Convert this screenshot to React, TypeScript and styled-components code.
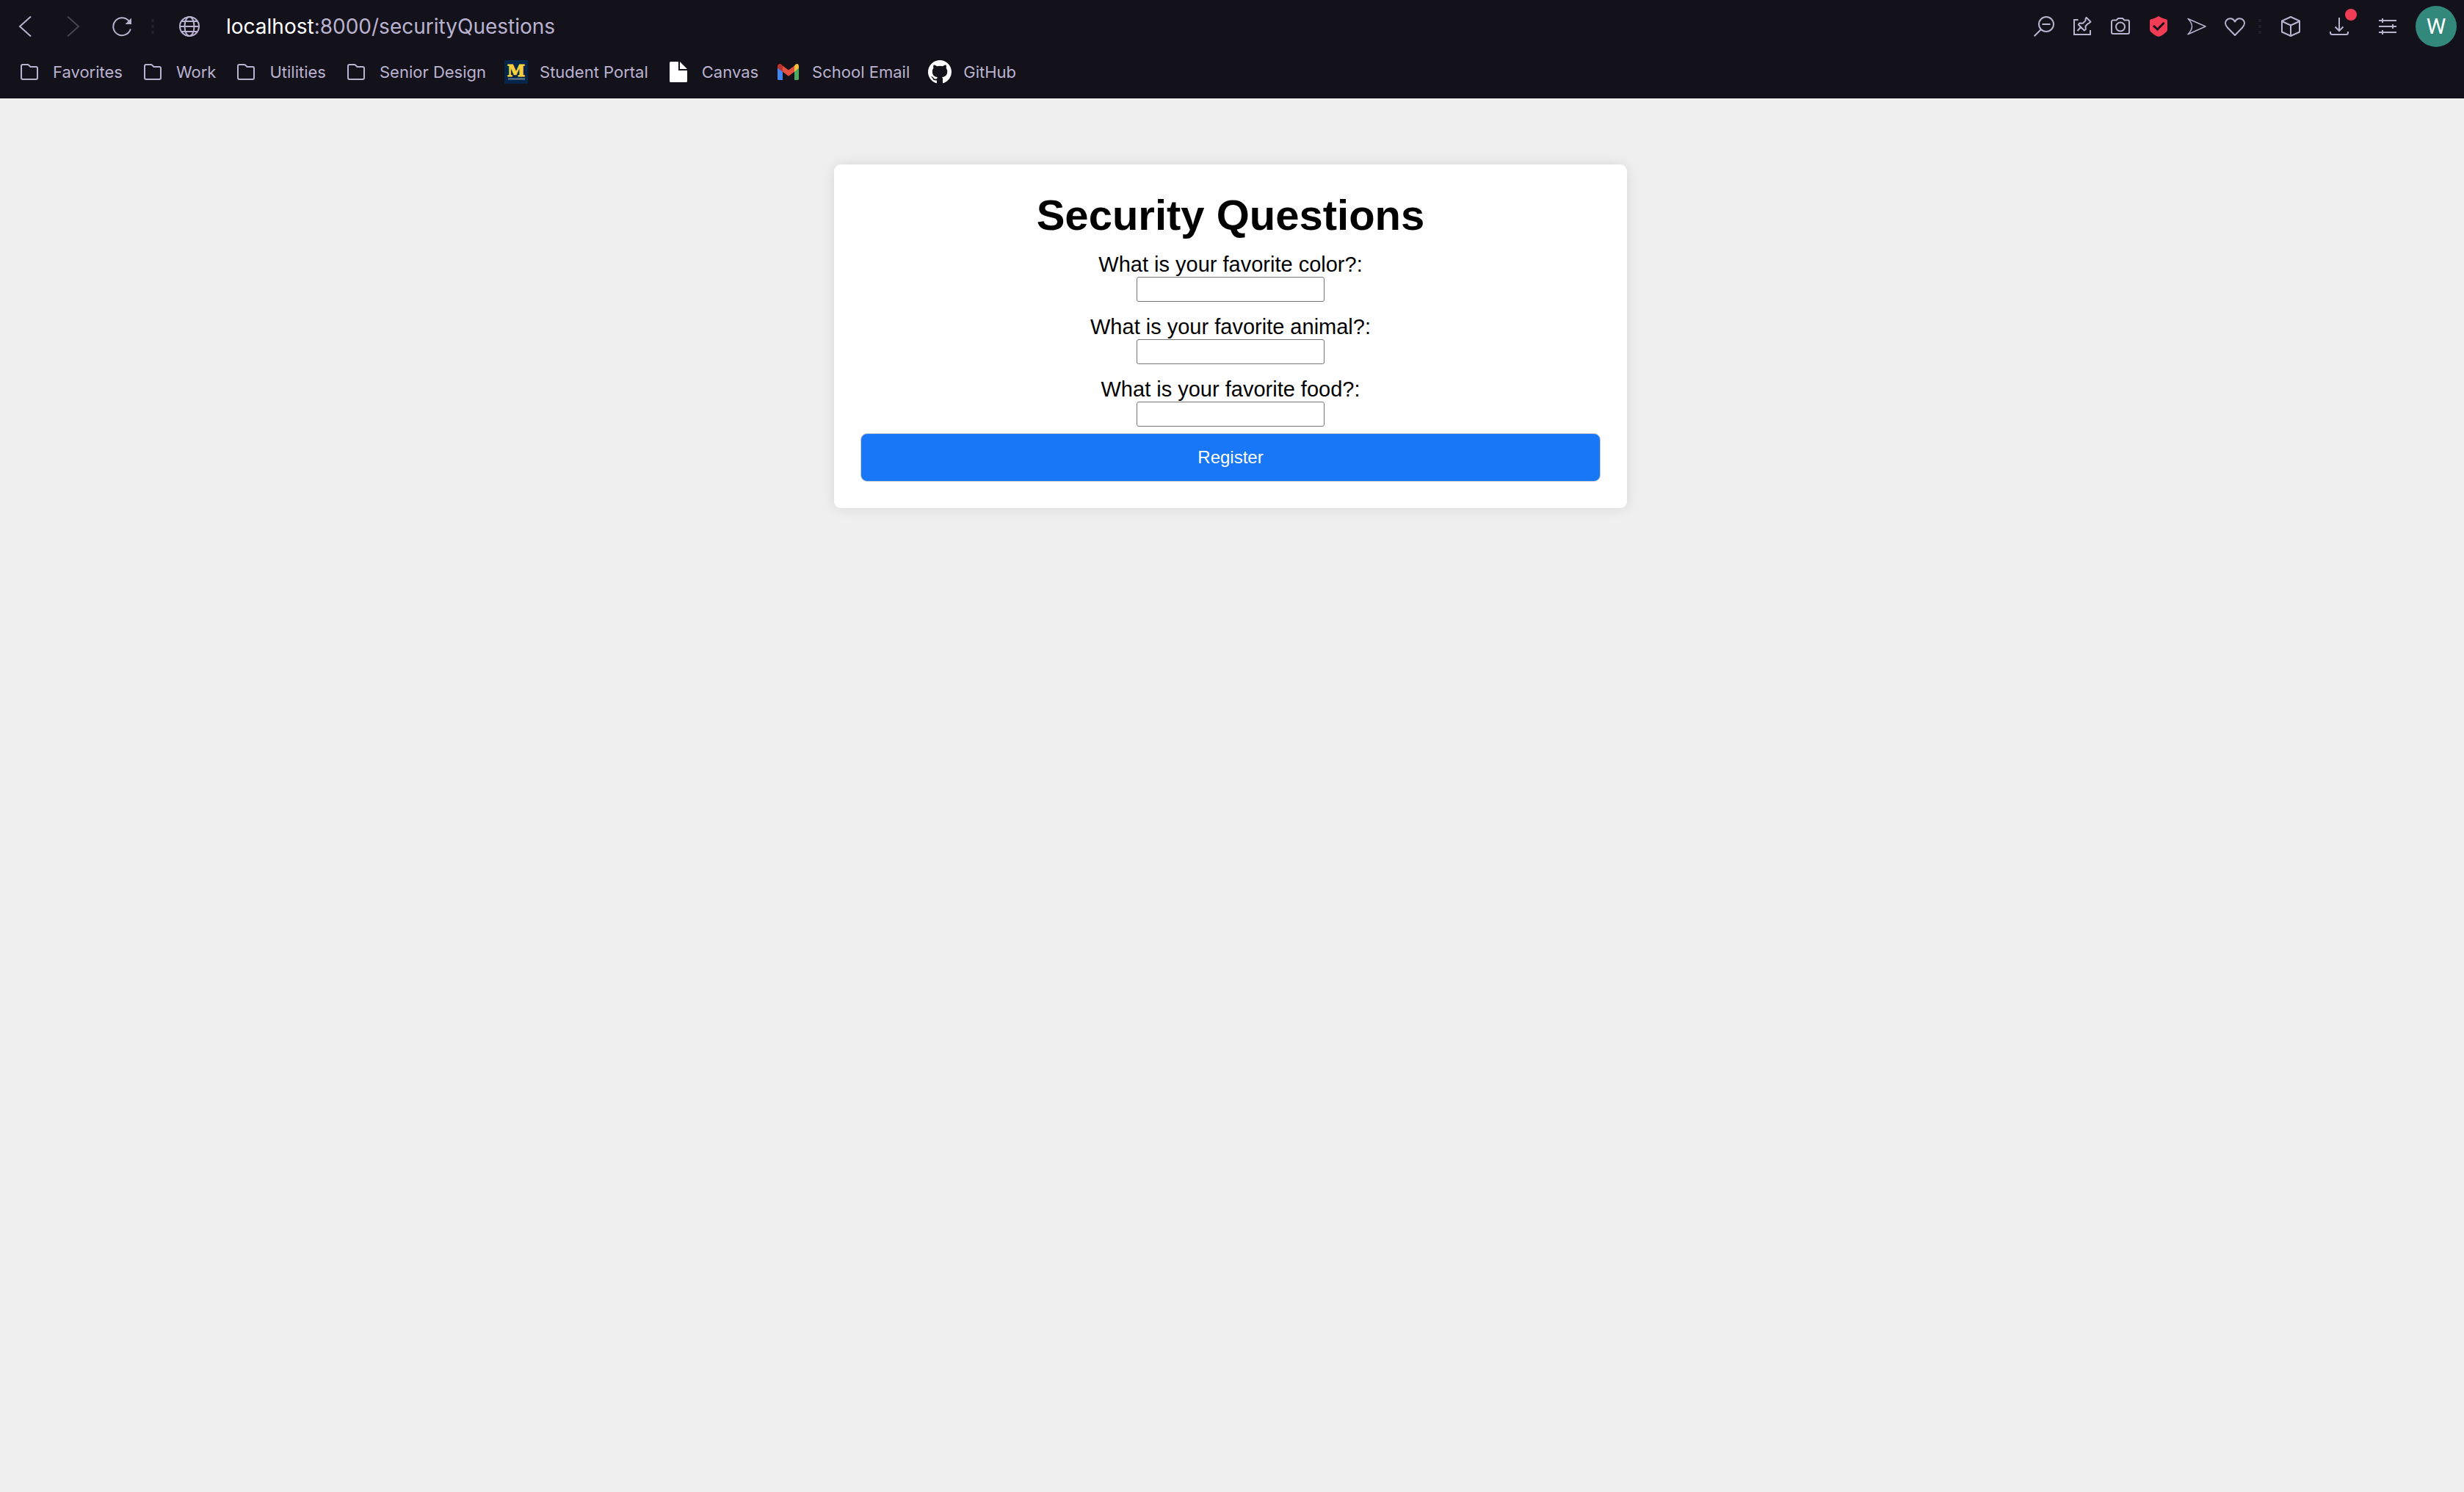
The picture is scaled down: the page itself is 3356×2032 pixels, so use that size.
import React from "react";
import styled, { createGlobalStyle } from "styled-components";

const GlobalStyle = createGlobalStyle`
  * { box-sizing: border-box; }
  body {
    margin: 0;
    background: #efefef;
    font-family: Arial, "Liberation Sans", sans-serif;
  }
`;

const Page = styled.div`
  min-height: 100vh;
  display: flex;
  flex-direction: column;
`;

const Chrome = styled.header`
  background: #13111a;
  color: #b9b3d0;
  border-bottom: 1px solid #0b0a10;
  font-family: Inter, "Noto Sans", sans-serif;
`;

const Toolbar = styled.div`
  display: flex;
  align-items: center;
  height: 72px;
  padding: 0 10px 0 8px;
`;

const Group = styled.div<{ $gap?: number }>`
  display: flex;
  align-items: center;
  gap: ${(p) => p.$gap ?? 0}px;
`;

const IconButton = styled.button`
  position: relative;
  display: flex;
  align-items: center;
  justify-content: center;
  width: 52px;
  height: 52px;
  padding: 0;
  border: 0;
  background: none;
  color: inherit;

  &:disabled { color: #47444f; }
`;

const Dots = styled.div<{ $tight?: boolean }>`
  display: grid;
  gap: 4px;
  margin: 0 14px 0 ${(p) => (p.$tight ? 6 : 14)}px;

  i {
    width: 4px;
    height: 4px;
    background: #211f2e;
  }
`;

const Address = styled.div`
  flex: 1;
  display: flex;
  align-items: center;
  gap: 36px;
  padding-left: 20px;
  font-size: 28px;
  line-height: 36px;
  white-space: nowrap;
`;

const Host = styled.span`
  color: #ffffff;
`;

const Alert = styled.span`
  position: absolute;
  top: 2px;
  right: 2px;
  width: 16px;
  height: 16px;
  border-radius: 50%;
  background: #f03c55;
`;

const Avatar = styled.button`
  width: 56px;
  height: 56px;
  margin-left: 12px;
  padding: 0;
  border: 0;
  border-radius: 50%;
  background: #31887b;
  color: #ffffff;
  font: 30px/56px Roboto, sans-serif;
`;

const Bookmarks = styled.nav`
  display: flex;
  gap: 25px;
  padding: 8px 24px 17px;
`;

const Bookmark = styled.a`
  display: flex;
  align-items: center;
  gap: 16px;
  height: 36px;
  color: inherit;
  font-size: 22px;
  line-height: 36px;
  text-decoration: none;
  white-space: nowrap;
`;

const Content = styled.main`
  flex: 1;
  padding: 90px 4px 90px 0;
`;

const Card = styled.form`
  width: 1080px;
  max-width: 100%;
  margin: 0 auto;
  padding: 36px;
  border-radius: 9px;
  background: #ffffff;
  box-shadow: 0 0 18px rgba(0, 0, 0, 0.1);
  color: #000000;
  text-align: center;
`;

const Title = styled.h1`
  margin: 0;
  font-size: 58px;
  line-height: 66px;
`;

const Field = styled.div`
  display: flex;
  flex-direction: column;
  align-items: center;
  margin-top: 18px;
`;

const Label = styled.label`
  font-size: 29px;
  line-height: 33px;
`;

const Answer = styled.input`
  width: 256px;
  height: 34px;
  padding: 2px 4px;
  border: 1px solid #767676;
  border-radius: 3px;
  background: #ffffff;
  font: 24px Arial, "Liberation Sans", sans-serif;
`;

const Submit = styled.button`
  display: block;
  width: 100%;
  height: 66px;
  margin-top: 9px;
  padding: 0;
  border: 1px solid #c4c8ce;
  border-radius: 9px;
  background: #1877f7;
  color: #ffffff;
  font: 24px Arial, "Liberation Sans", sans-serif;
`;

type IconProps = { size?: number; stroke?: number; children: React.ReactNode };

const Icon = ({ size = 28, stroke = 2, children }: IconProps) => (
  <svg
    width={size}
    height={size}
    viewBox={`0 0 ${size} ${size}`}
    fill="none"
    stroke="currentColor"
    strokeWidth={stroke}
    aria-hidden="true"
  >
    {children}
  </svg>
);

const Separator = ({ tight }: { tight?: boolean }) => (
  <Dots $tight={tight}>
    <i />
    <i />
    <i />
  </Dots>
);

const BackIcon = () => <Icon><path d="M22 .5 7 14l15 13.500" /></Icon>;
const ForwardIcon = () => <Icon><path d="M6 .5 21 14 6 27.500" /></Icon>;

const ReloadIcon = () => (
  <Icon>
    <path d="M25.800 17.500A12 12 0 1 1 23.500 6.500" />
    <path d="M27 2.500v8.500h-8.500Z" fill="currentColor" stroke="none" />
  </Icon>
);

const GlobeIcon = () => (
  <Icon>
    <circle cx="14" cy="14" r="13" />
    <ellipse cx="14" cy="14" rx="6.500" ry="13" />
    <path d="M1 14h26M3.500 7h21M3.500 21h21" />
  </Icon>
);

const ZoomOutIcon = () => (
  <Icon>
    <circle cx="17" cy="11" r="10" />
    <path d="M11.500 11h11M10 18 .7 27.300" />
  </Icon>
);

const PinIcon = () => (
  <Icon>
    <path d="M8.500 5H3v20h22v-6" />
    <path d="m19.500 1.800 6 6-2.500 2-1 .2-3.500 3.500.3 4.500-2 1.500-8-8 1.700-2 4.300.3 3.700-3.700V4ZM12.500 14.500 7.500 20" strokeLinejoin="round" />
  </Icon>
);

const CameraIcon = () => (
  <Icon>
    <path d="M4 5.500h4.500L11 3h6l2.500 2.500H24a2 2 0 0 1 2 2V22a2 2 0 0 1-2 2H4a2 2 0 0 1-2-2V7.500a2 2 0 0 1 2-2Z" strokeLinejoin="round" />
    <circle cx="14" cy="14.500" r="6" />
  </Icon>
);

const ShieldIcon = () => (
  <Icon stroke={3}>
    <path d="M14 0c3.500 2 7.500 3.500 11 4.500q1 .5 1 2V18q0 2-1.500 3.500C21.500 24.500 18 26.800 14 28 10 26.800 6.500 24.500 3.500 21.500Q2 20 2 18V6.500q0-1.500 1-2C6.500 3.500 10.500 2 14 0Z" fill="#f03c55" stroke="none" />
    <path d="m7 13 5.500 5 9-9" stroke="#13111a" />
  </Icon>
);

const SendIcon = () => (
  <Icon stroke={1.5}>
    <path d="M2 3.500 26 14 2 24.800Q7.500 19 7.500 14T2 3.500Z" strokeLinejoin="round" />
  </Icon>
);

const HeartIcon = () => (
  <Icon>
    <path d="M14 26 3.800 15.500C.5 12 .3 7.800 2.800 5.200 6 2 11.500 2.500 14 7.500c2.500-5 8-5.500 11.200-2.300 2.500 2.600 2.300 6.800-1 10.300Z" strokeLinejoin="round" />
  </Icon>
);

const CubeIcon = () => (
  <Icon>
    <path d="m14 1 12 5.500v15L14 27 2 21.500v-15ZM2 7l12 5.500L26 7M14 12.500V27" strokeLinejoin="round" />
  </Icon>
);

const DownloadIcon = () => (
  <Icon>
    <path d="M14 2v18M8.500 14.500 14 20l5.500-5.500M2 21v1.500Q2 25 4.500 25h19q2.500 0 2.500-2.500V21" />
  </Icon>
);

const SlidersIcon = () => (
  <Icon>
    <path d="M2 6h24M2 14h24M2 22h24M7 3v6M21 11v6M7 19v6" />
  </Icon>
);

const FolderIcon = () => (
  <Icon size={32}>
    <path d="M7 6h6.500q1 0 2 1l2 2H25q2 0 2 2v13q0 2-2 2H7q-2 0-2-2V8q0-2 2-2Z" strokeLinejoin="round" />
  </Icon>
);

const CampusIcon = () => (
  <Icon size={32}>
    <rect width="32" height="32" fill="#04254a" stroke="none" />
    <text x="16" y="22" textAnchor="middle" fontFamily="DejaVu Serif, serif" fontWeight="700" fontSize="22" fill="#f9cf3c" stroke="#f9cf3c" strokeWidth="1">M</text>
    <path d="M5 25.500h23" stroke="#6c7f92" strokeWidth="2" />
  </Icon>
);

const FileIcon = () => (
  <Icon size={32}>
    <path d="M5.500 2H16v12h12v14.500q0 1.500-1.500 1.500h-21Q4 30 4 28.500v-25Q4 2 5.500 2ZM18 2l10 10H18Z" fill="#ffffff" stroke="none" />
  </Icon>
);

const MailIcon = () => (
  <Icon size={32}>
    <g stroke="none">
      <path d="M1 10v15.500q0 1.500 1.500 1.500H8V14.500Z" fill="#4384f3" />
      <path d="M24 14.500V27h4.500q1.500 0 1.500-1.500V10Z" fill="#4ea860" />
      <path d="M8 7.500 16 13.500l8-6v8.200l-8 6-8-6Z" fill="#e5503f" />
      <path d="M1 8.500C1 5 4.500 4 7 6.300L8 7.500v8.200l-7-5.200Z" fill="#bd322c" />
      <path d="M24 7.500 25 6.300C27.500 4 30 5 30 8.500v2l-6 5.200Z" fill="#f8c13c" />
    </g>
  </Icon>
);

const GitHubIcon = () => (
  <svg width="32" height="32" viewBox="0 0 16 16" fill="#ffffff" aria-hidden="true">
    <path d="M8 0C3.580 0 0 3.580 0 8c0 3.540 2.290 6.530 5.470 7.590.4.070.55-.17.55-.38 0-.19-.01-.82-.01-1.490-2.010.37-2.530-.49-2.690-.94-.09-.23-.48-.94-.82-1.130-.28-.15-.68-.52-.01-.53.630-.01 1.080.58 1.230.82.72 1.210 1.870.87 2.330.66.070-.52.28-.87.51-1.070-1.780-.2-3.640-.89-3.640-3.950 0-.87.31-1.590.82-2.150-.08-.2-.36-1.020.08-2.120 0 0 .67-.21 2.200.82.64-.18 1.320-.27 2-.27s1.360.09 2 .27c1.530-1.040 2.200-.82 2.200-.82.44 1.100.16 1.920.08 2.120.51.56.82 1.270.82 2.150 0 3.070-1.870 3.750-3.650 3.950.29.25.54.73.54 1.480 0 1.070-.01 1.930-.01 2.200 0 .21.15.46.55.38A8.010 8.010 0 0 0 16 8c0-4.420-3.580-8-8-8Z" />
  </svg>
);

const bookmarks = [
  { name: "Favorites", icon: FolderIcon },
  { name: "Work", icon: FolderIcon },
  { name: "Utilities", icon: FolderIcon },
  { name: "Senior Design", icon: FolderIcon },
  { name: "Student Portal", icon: CampusIcon },
  { name: "Canvas", icon: FileIcon },
  { name: "School Email", icon: MailIcon },
  { name: "GitHub", icon: GitHubIcon },
];

const pageActions = [
  { name: "Zoom out", icon: ZoomOutIcon },
  { name: "Pin page", icon: PinIcon },
  { name: "Snapshot", icon: CameraIcon },
  { name: "Ad blocker", icon: ShieldIcon },
  { name: "Send page", icon: SendIcon },
  { name: "Add to favorites", icon: HeartIcon },
];

const questions = [
  { id: "color", text: "What is your favorite color?:" },
  { id: "animal", text: "What is your favorite animal?:" },
  { id: "food", text: "What is your favorite food?:" },
];

export default function App() {
  return (
    <Page>
      <GlobalStyle />
      <Chrome>
        <Toolbar>
          <Group $gap={14}>
            <IconButton aria-label="Back"><BackIcon /></IconButton>
            <IconButton aria-label="Forward" disabled><ForwardIcon /></IconButton>
            <IconButton aria-label="Reload"><ReloadIcon /></IconButton>
          </Group>
          <Separator />
          <Address>
            <GlobeIcon />
            <span><Host>localhost</Host>:8000/securityQuestions</span>
          </Address>
          <Group>
            {pageActions.map(({ name, icon: Glyph }) => (
              <IconButton key={name} aria-label={name}><Glyph /></IconButton>
            ))}
          </Group>
          <Separator tight />
          <Group $gap={14}>
            <IconButton aria-label="Extensions"><CubeIcon /></IconButton>
            <IconButton aria-label="Downloads"><DownloadIcon /><Alert /></IconButton>
            <IconButton aria-label="Easy setup"><SlidersIcon /></IconButton>
          </Group>
          <Avatar aria-label="Profile">W</Avatar>
        </Toolbar>
        <Bookmarks aria-label="Bookmarks">
          {bookmarks.map(({ name, icon: Glyph }) => (
            <Bookmark key={name} href="#"><Glyph />{name}</Bookmark>
          ))}
        </Bookmarks>
      </Chrome>
      <Content>
        <Card onSubmit={(e) => e.preventDefault()}>
          <Title>Security Questions</Title>
          {questions.map((q) => (
            <Field key={q.id}>
              <Label htmlFor={q.id}>{q.text}</Label>
              <Answer id={q.id} name={q.id} type="text" />
            </Field>
          ))}
          <Submit type="submit">Register</Submit>
        </Card>
      </Content>
    </Page>
  );
}
